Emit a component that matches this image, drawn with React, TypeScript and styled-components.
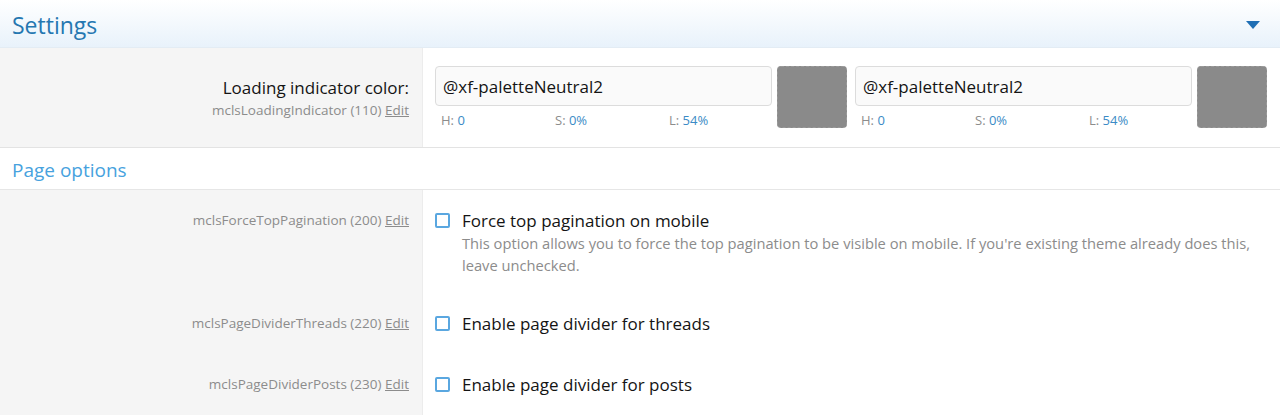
import React from "react";
import styled, { createGlobalStyle } from "styled-components";

const GlobalStyle = createGlobalStyle`
  html, body {
    margin: 0;
    padding: 0;
    background: #fff;
  }
  body {
    font-family: "Open Sans", "Noto Sans", sans-serif;
    color: #141414;
  }
`;

const Page = styled.div`
  width: 1280px;
  height: 416px;
  overflow: hidden;
  background: #fff;
`;

const Header = styled.div`
  height: 48px;
  box-sizing: border-box;
  display: flex;
  align-items: center;
  justify-content: space-between;
  padding: 0 20px 0 12px;
  background: linear-gradient(to bottom, #ffffff 0%, #e8f2fb 100%);
  border-bottom: 1px solid #e3ecf4;
`;

const Title = styled.h2`
  margin: 0;
  font-size: 23px;
  font-weight: 400;
  color: #2577b1;
  padding-top: 2px;
`;

const Toggle = styled.span`
  width: 0;
  height: 0;
  border-left: 7px solid transparent;
  border-right: 7px solid transparent;
  border-top: 8px solid #1f6fb5;
  margin-top: 2px;
`;

const Row = styled.div`
  display: grid;
  grid-template-columns: 423px 1fr;
`;

const Term = styled.div<{ $pad: number }>`
  background: #f5f5f5;
  border-right: 1px solid #ececec;
  box-sizing: border-box;
  padding: ${(p) => p.$pad}px 13px 10px 10px;
  text-align: right;
`;

const TermLabel = styled.div`
  font-size: 17px;
  line-height: 22px;
  color: #141414;
`;

const Hint = styled.div`
  font-size: 13.5px;
  line-height: 22px;
  color: #8c8c8c;
`;

const EditLink = styled.span`
  text-decoration: underline;
  color: #8c8c8c;
`;

const Value = styled.div<{ $pad: number; $bottom: number }>`
  min-width: 0;
  padding: ${(p) => p.$pad}px 13px ${(p) => p.$bottom}px 12px;
`;

const ColorPair = styled.div`
  display: flex;
  gap: 8px;
`;

const ColorGroup = styled.div`
  flex: 1 1 0;
  min-width: 0;
  display: flex;
  gap: 5px;
`;

const InputWrap = styled.div`
  flex: 1 1 0;
  min-width: 0;
  display: flex;
  flex-direction: column;
`;

const TextInput = styled.div`
  height: 40px;
  box-sizing: border-box;
  border: 1px solid #dcdcdc;
  border-radius: 4px;
  background: #fafafa;
  padding: 0 7px;
  display: flex;
  align-items: center;
  font-size: 17px;
  color: #141414;
`;

const HslLine = styled.div`
  display: grid;
  grid-template-columns: 114px 114px 1fr;
  padding: 5px 0 0 6px;
  font-size: 13px;
  line-height: 18px;
  color: #8c8c8c;
`;

const HslValue = styled.span`
  color: #3b8bc6;
`;

const Swatch = styled.div<{ $color: string }>`
  flex: none;
  width: 70px;
  height: 62px;
  box-sizing: border-box;
  border-radius: 4px;
  border: 1px dashed #9a9a9a;
  background: ${(p) => p.$color};
`;

const Section = styled.div`
  height: 43px;
  box-sizing: border-box;
  display: flex;
  align-items: center;
  padding: 3px 12px 0;
  border-top: 1px solid #e3e3e3;
  border-bottom: 1px solid #e6e6e6;
  font-size: 19px;
  color: #47a2de;
`;

const CheckRow = styled.div`
  display: flex;
  gap: 12px;
  align-items: flex-start;
`;

const Box = styled.span`
  flex: none;
  width: 15px;
  height: 15px;
  box-sizing: border-box;
  border: 2px solid #5aa7e0;
  border-radius: 2px;
  background: #fff;
  margin-top: 3px;
`;

const CheckText = styled.div`
  display: flex;
  flex-direction: column;
`;

const CheckLabel = styled.div`
  font-size: 17px;
  line-height: 22px;
  color: #141414;
`;

const Explain = styled.div`
  font-size: 14.7px;
  line-height: 22px;
  color: #8c8c8c;
`;

type Option = {
  id: string;
  order: number;
  label: string;
  explain?: string;
};

const options: Option[] = [
  {
    id: "mclsForceTopPagination",
    order: 200,
    label: "Force top pagination on mobile",
    explain:
      "This option allows you to force the top pagination to be visible on mobile. If you're existing theme already does this, leave\u00a0unchecked.",
  },
  { id: "mclsPageDividerThreads", order: 220, label: "Enable page divider for threads" },
  { id: "mclsPageDividerPosts", order: 230, label: "Enable page divider for posts" },
];

const ColorInput = ({ value }: { value: string }) => (
  <ColorGroup>
    <InputWrap>
      <TextInput>{value}</TextInput>
      <HslLine>
        <span>
          H: <HslValue>0</HslValue>
        </span>
        <span>
          S: <HslValue>0%</HslValue>
        </span>
        <span>
          L: <HslValue>54%</HslValue>
        </span>
      </HslLine>
    </InputWrap>
    <Swatch $color="#8a8a8a" />
  </ColorGroup>
);

export default function App() {
  return (
    <Page>
      <GlobalStyle />
      <Header>
        <Title>Settings</Title>
        <Toggle />
      </Header>

      <Row>
        <Term $pad={29}>
          <TermLabel>Loading indicator color:</TermLabel>
          <Hint>
            mclsLoadingIndicator (110) <EditLink>Edit</EditLink>
          </Hint>
        </Term>
        <Value $pad={18} $bottom={18}>
          <ColorPair>
            <ColorInput value="@xf-paletteNeutral2" />
            <ColorInput value="@xf-paletteNeutral2" />
          </ColorPair>
        </Value>
      </Row>

      <Section>Page options</Section>

      {options.map((o) => (
        <Row key={o.id}>
          <Term $pad={19}>
            <Hint>
              {o.id} ({o.order}) <EditLink>Edit</EditLink>
            </Hint>
          </Term>
          <Value $pad={20} $bottom={o.explain ? 17 : 19}>
            <CheckRow>
              <Box />
              <CheckText>
                <CheckLabel>{o.label}</CheckLabel>
                {o.explain && <Explain>{o.explain}</Explain>}
              </CheckText>
            </CheckRow>
          </Value>
        </Row>
      ))}
    </Page>
  );
}
